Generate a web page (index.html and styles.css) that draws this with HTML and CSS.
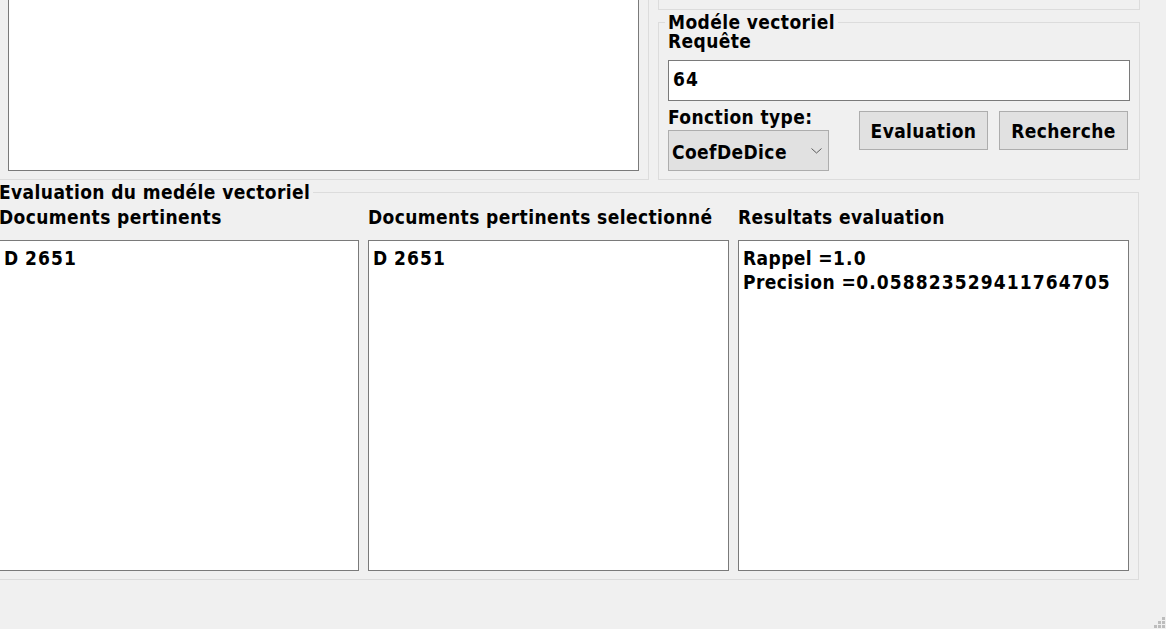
FILE: index.html
```html
<!DOCTYPE html>
<html lang="fr">
<head>
<meta charset="utf-8">
<title>Modéle vectoriel</title>
<link rel="stylesheet" href="styles.css">
</head>
<body>
<div class="window">
  <div class="top">
    <div class="group group-left">
      <div class="textarea"></div>
    </div>
    <div class="right-col">
      <div class="group group-stub"></div>
      <div class="group group-modele">
        <div class="group-title">Modéle vectoriel</div>
        <div class="label">Requête</div>
        <div class="input"><span class="num">64</span></div>
        <div class="row">
          <div class="fn-col">
            <div class="label">Fonction type:</div>
            <div class="combo">
              <span>CoefDeDice</span>
              <svg class="chevron" width="11" height="6" viewBox="0 0 11 6"><polyline points="0.5,0.5 5.5,5 10.5,0.5" fill="none" stroke="#5a5a5a" stroke-width="1"/></svg>
            </div>
          </div>
          <div class="button btn-eval">Evaluation</div>
          <div class="button btn-search">Recherche</div>
        </div>
      </div>
    </div>
  </div>
  <div class="group group-eval">
    <div class="group-title">Evaluation du medéle vectoriel</div>
    <div class="columns">
      <div class="col col-1">
        <div class="label">Documents pertinents</div>
        <div class="list">D <span class="num">2651</span></div>
      </div>
      <div class="col col-2">
        <div class="label">Documents pertinents selectionné</div>
        <div class="list">D <span class="num">2651</span></div>
      </div>
      <div class="col col-3">
        <div class="label">Resultats evaluation</div>
        <div class="list">Rappel =<span class="num">1.0</span><br>Precision =<span class="num">0.058823529411764705</span></div>
      </div>
    </div>
  </div>
  <svg class="grip" width="11" height="11" viewBox="0 0 11 11">
    <rect x="8" y="0" width="3" height="3" fill="#bdbdbd"/>
    <rect x="4" y="4" width="3" height="3" fill="#bdbdbd"/>
    <rect x="8" y="4" width="3" height="3" fill="#bdbdbd"/>
    <rect x="0" y="8" width="3" height="3" fill="#bdbdbd"/>
    <rect x="4" y="8" width="3" height="3" fill="#bdbdbd"/>
    <rect x="8" y="8" width="3" height="3" fill="#bdbdbd"/>
  </svg>
</div>
</body>
</html>
```
FILE: styles.css
```css
html, body {
  margin: 0;
  padding: 0;
}
body {
  background: #f0f0f0;
  width: 1166px;
  height: 629px;
  overflow: hidden;
  font-family: "DejaVu Sans Condensed", "DejaVu Sans", sans-serif;
  font-weight: bold;
  font-size: 19px;
  letter-spacing: 0.4px;
  color: #000;
}
.num {
  letter-spacing: 1.1px;
}
.window {
  position: relative;
  width: 1166px;
  height: 629px;
}
.top {
  display: flex;
  height: 180px;
}
.group {
  border: 1px solid #dcdcdc;
  box-sizing: border-box;
}
.group-left {
  margin-left: -10px;
  width: 659px;
  height: 180px;
  flex-shrink: 0;
  border-top: none;
  padding: 0 9px 8px 17px;
  display: flex;
  flex-direction: column;
  justify-content: flex-end;
}
.textarea {
  height: 220px;
  flex-shrink: 0;
  box-sizing: border-box;
  background: #fff;
  border: 1px solid #7a7a7a;
}
.right-col {
  margin-left: 9px;
  width: 482px;
  flex-shrink: 0;
  display: flex;
  flex-direction: column;
}
.group-stub {
  height: 10px;
  border-top: none;
}
.group-modele {
  margin-top: 12px;
  height: 158px;
  padding: 0 9px 8px 9px;
}
.group-title {
  margin-top: -10px;
  line-height: 19px;
  width: fit-content;
  background: #f0f0f0;
  padding: 0 3px;
  margin-left: -3px;
}
.label {
  line-height: 19px;
  white-space: nowrap;
}
.input {
  margin-top: 9px;
  height: 41px;
  box-sizing: border-box;
  border: 1px solid #7a7a7a;
  background: #fff;
  padding: 0 0 3px 4px;
  display: flex;
  align-items: center;
  line-height: 19px;
}
.row {
  display: flex;
  margin-top: 7px;
  align-items: flex-start;
}
.fn-col {
  width: 161px;
  flex-shrink: 0;
}
.combo {
  margin-top: 3px;
  height: 41px;
  box-sizing: border-box;
  border: 1px solid #adadad;
  background: #e1e1e1;
  display: flex;
  align-items: center;
  padding: 3px 0 0 3px;
  line-height: 19px;
}
.chevron {
  margin-left: auto;
  margin-right: 6px;
  margin-top: -3px;
}
.button {
  margin-top: 3px;
  width: 129px;
  height: 39px;
  flex-shrink: 0;
  box-sizing: border-box;
  border: 1px solid #adadad;
  background: #e1e1e1;
  display: flex;
  align-items: center;
  justify-content: center;
  padding-top: 2px;
  line-height: 19px;
}
.btn-eval {
  margin-left: 30px;
}
.btn-search {
  margin-left: 11px;
}
.group-eval {
  margin-top: 12px;
  margin-left: -10px;
  width: 1149px;
  height: 388px;
  padding: 0 9px 8px 8px;
}
.columns {
  display: flex;
  gap: 9px;
  margin-top: 6px;
}
.col {
  display: flex;
  flex-direction: column;
  flex-shrink: 0;
}
.col-1 { width: 360px; }
.col-2 { width: 361px; }
.col-3 { width: 391px; }
.list {
  margin-top: 13px;
  height: 331px;
  box-sizing: border-box;
  border: 1px solid #7a7a7a;
  background: #fff;
  padding: 5px 4px;
  line-height: 24px;
  white-space: nowrap;
}
.grip {
  position: absolute;
  right: 1px;
  bottom: 1px;
}
```
